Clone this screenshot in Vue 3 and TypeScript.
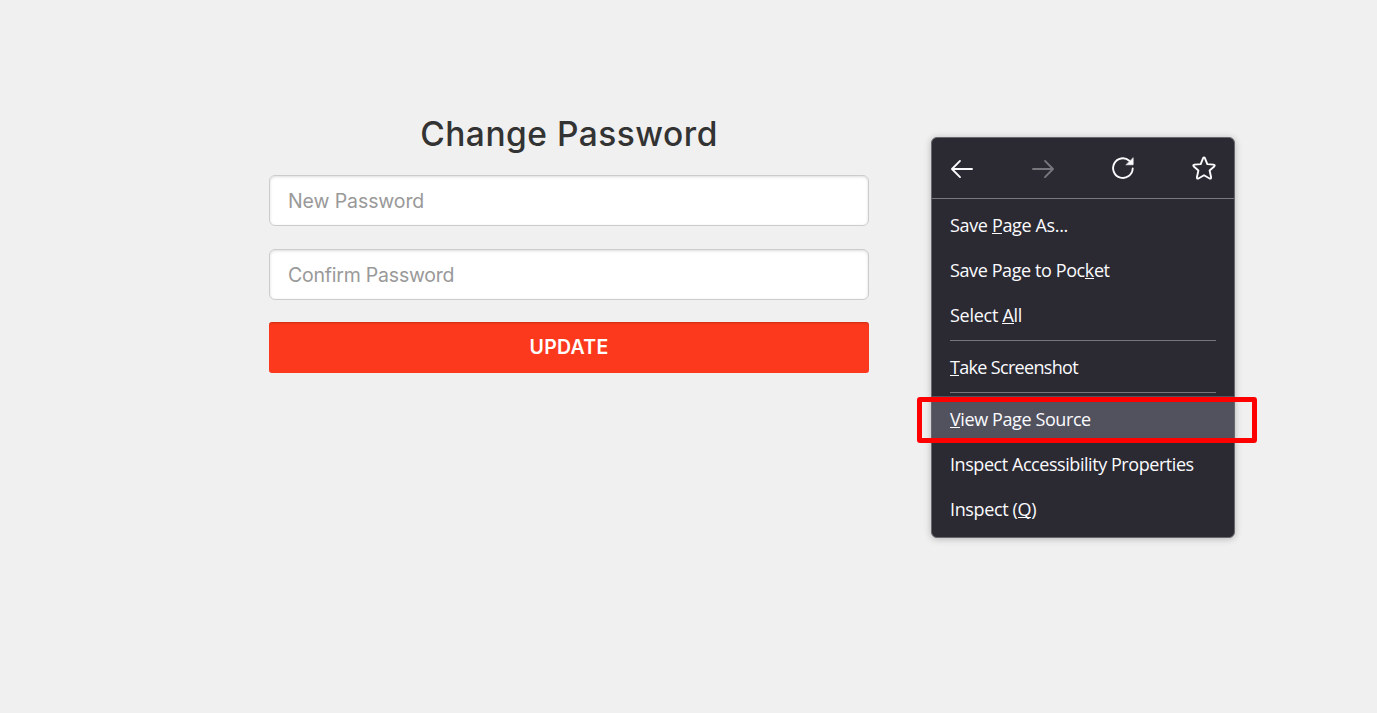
<script setup lang="ts">
interface MenuItem {
  before: string
  key: string
  after: string
  cls: string
  divided?: boolean
  active?: boolean
}

const items: MenuItem[] = [
  { before: 'Save ', key: 'P', after: 'age As...', cls: 'save-as' },
  { before: 'Save Page to Poc', key: 'k', after: 'et', cls: 'pocket' },
  { before: 'Select ', key: 'A', after: 'll', cls: 'select' },
  { before: '', key: 'T', after: 'ake Screenshot', cls: 'shot', divided: true },
  { before: '', key: 'V', after: 'iew Page Source', cls: 'source', divided: true, active: true },
  { before: 'Inspect Accessibility Properties', key: '', after: '', cls: 'a11y' },
  { before: 'Inspect (', key: 'Q', after: ')', cls: 'inspect' },
]
</script>

<template>
  <main class="page">
    <form class="form" @submit.prevent>
      <h1 class="title"><span>Change Password</span></h1>
      <input class="field new" type="password" placeholder="New Password" />
      <input class="field confirm" type="password" placeholder="Confirm Password" />
      <button class="submit" type="submit"><span>UPDATE</span></button>
    </form>

    <div class="menu">
      <div class="nav">
        <svg width="24" height="24" viewBox="0 0 24 24" class="icon">
          <path d="M22 13H2.4M10 4.900L2 13l8 8.100" />
        </svg>
        <svg width="24" height="24" viewBox="0 0 24 24" class="icon dim">
          <path d="M2 13h19.600M14 4.900L22 13l-8 8.100" />
        </svg>
        <svg width="24" height="24" viewBox="0 0 24 24" class="icon">
          <path d="M21.700 12.500A9.800 9.800 0 1 1 18.300 4.700" />
          <path class="solid" d="M22.200 2v6.800h-7z" />
        </svg>
        <svg width="24" height="24" viewBox="0 0 24 24" class="icon">
          <path d="M11 2.300q1-1.800 2 0L15.300 8.100l6.300.5q1.900.4.6 1.900L17.600 14.500l1.500 6.700q.2 1.900-1.500 1.300L12 19.300 6.400 22.500q-1.700.6-1.500-1.300L6.400 14.500 1.800 10.500q-1.300-1.500.6-1.900l6.300-.5z" />
        </svg>
      </div>
      <div class="items">
        <template v-for="item in items" :key="item.cls">
          <div v-if="item.divided" class="divider"></div>
          <div class="item" :class="{ active: item.active }">
            <span class="label" :class="item.cls">{{ item.before }}<span v-if="item.key" class="key">{{ item.key }}</span>{{ item.after }}</span>
          </div>
        </template>
      </div>
    </div>
    <div class="marker"></div>
  </main>
</template>

<style>
html,
body {
  margin: 0;
  background: #f0f0f0;
}
</style>

<style scoped>
.page {
  position: relative;
  box-sizing: border-box;
  width: 1377px;
  height: 713px;
  padding: 113px 0 0 269px;
  overflow: hidden;
  background: #f0f0f0;
  font-family: Inter, "Liberation Sans", sans-serif;
}
.form {
  display: flex;
  flex-direction: column;
  width: 600px;
}
.title {
  height: 42px;
  margin: 0 0 20px;
  color: #333;
  font-size: 33.5px;
  font-weight: 500;
  line-height: 42px;
  text-align: center;
  letter-spacing: 0.5px;
  white-space: nowrap;
}
.field {
  box-sizing: border-box;
  width: 600px;
  height: 51px;
  margin: 0 0 23px;
  padding: 1px 18px 0;
  border: 1px solid #ccc;
  border-radius: 6px;
  outline: 0;
  background: #fff;
  box-shadow: inset 0 1px 3px rgba(0, 0, 0, 0.14);
  font: 400 19.5px Inter, sans-serif;
  letter-spacing: -0.1px;
}
.field::placeholder {
  color: #999;
  opacity: 1;
}
.confirm {
  margin-bottom: 22px;
  letter-spacing: -0.22px;
}
.submit {
  height: 51px;
  padding: 0 0 2px;
  border: 0;
  border-radius: 3px;
  background: #fc391c;
  box-shadow: inset 0 2px 2px -1px rgba(80, 20, 0, 0.3);
  color: #fff;
  font: 600 19.5px Inter, sans-serif;
  letter-spacing: 0.25px;
}
.menu {
  position: absolute;
  top: 137px;
  left: 931px;
  box-sizing: border-box;
  width: 304px;
  height: 401px;
  overflow: visible;
  border: 1px solid #68676d;
  border-radius: 6px;
  background: #2b2a33;
  box-shadow: 0 1px 7px rgba(0, 0, 0, 0.25);
  color: #fbfbfe;
  font-family: "Open Sans", "Noto Sans", sans-serif;
}
.nav {
  display: flex;
  align-items: center;
  justify-content: space-between;
  height: 60px;
  padding: 0 18px;
  border-bottom: 1px solid #79787e;
}
.icon {
  fill: none;
  stroke: #fbfbfe;
  stroke-width: 1.9;
  stroke-linecap: round;
  stroke-linejoin: round;
}
.dim {
  stroke: #77767c;
}
.solid {
  fill: #fbfbfe;
  stroke-width: 0.6;
}
.items {
  padding-top: 3px;
}
.item {
  display: flex;
  align-items: center;
  height: 45px;
  padding: 1px 18px 0;
  box-sizing: border-box;
  font-size: 18px;
}
.active {
  background: #52525e;
}
.label {
  white-space: pre;
}
.save-as {
  letter-spacing: -0.35px;
}
.pocket {
  letter-spacing: -0.4px;
}
.select {
  letter-spacing: -0.27px;
}
.shot {
  letter-spacing: -0.68px;
}
.source {
  letter-spacing: -0.4px;
}
.a11y {
  letter-spacing: -0.44px;
}
.inspect {
  letter-spacing: -0.36px;
}
.key {
  background: linear-gradient(#fbfbfe, #fbfbfe) 0 20px / 100% 1px no-repeat;
}
.divider {
  height: 1px;
  margin: 3px 18px;
  background: #76757b;
}
.marker {
  position: absolute;
  top: 397px;
  left: 917px;
  box-sizing: border-box;
  width: 340px;
  height: 46px;
  border: 5px solid #f00;
  border-radius: 3px;
}
</style>
